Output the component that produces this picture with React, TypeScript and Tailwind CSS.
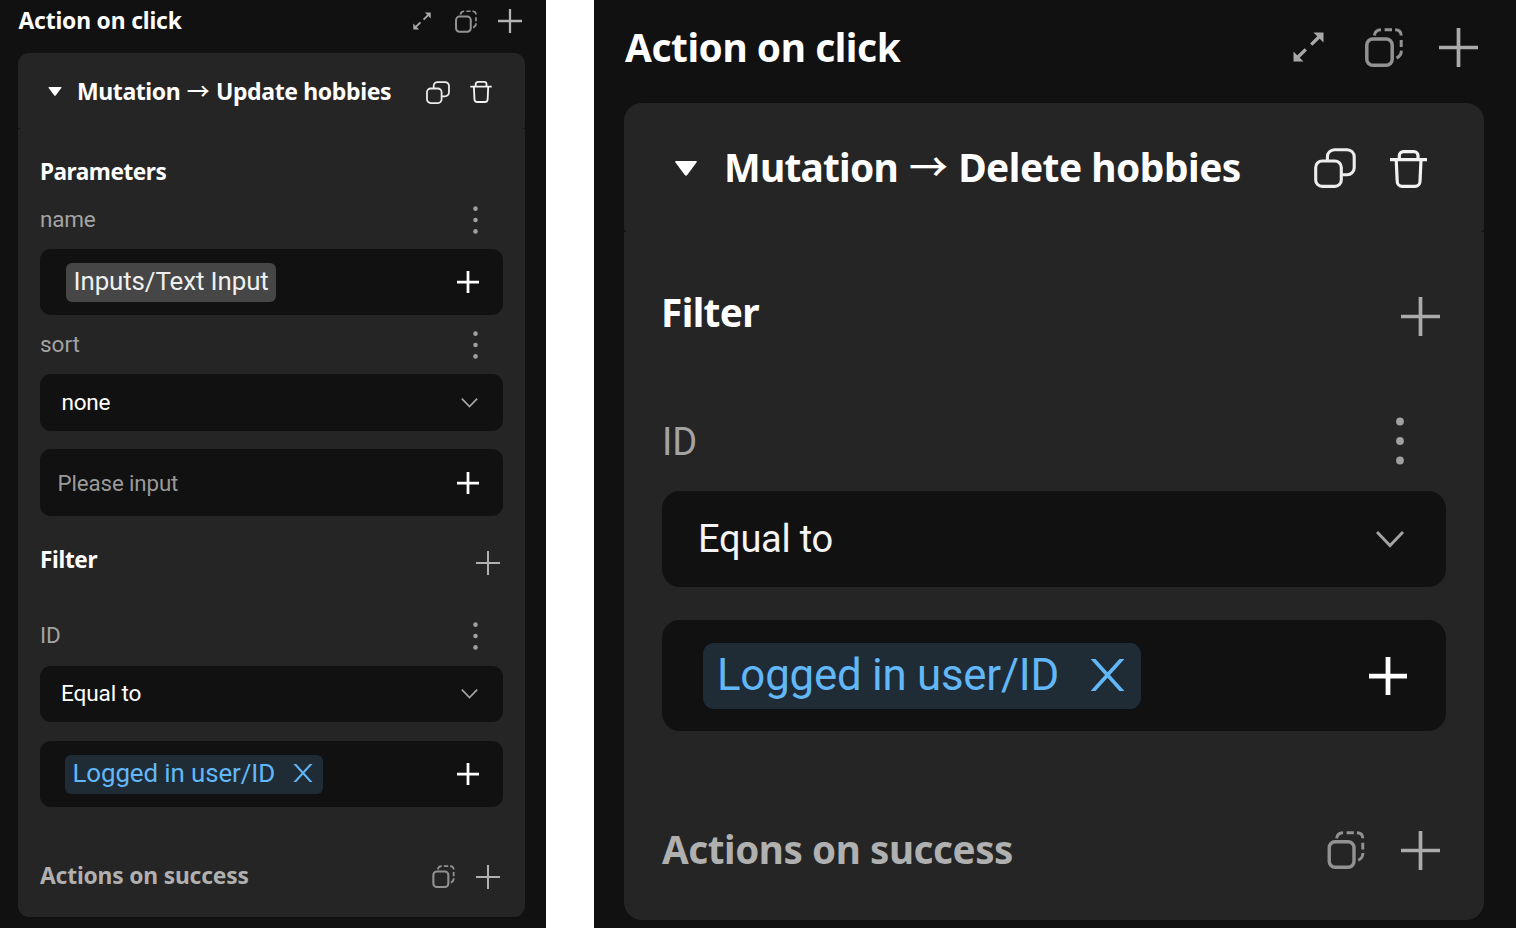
import type { ReactNode } from "react";

const heading = "font-['Noto_Sans',sans-serif] font-bold leading-none whitespace-nowrap";
const body = "font-['Roboto',sans-serif] leading-none whitespace-nowrap";

type IconProps = { className: string };

function Plus({ className, weight }: IconProps & { weight: number }) {
  return (
    <svg viewBox="0 0 40 40" className={`shrink-0 ${className}`} stroke="currentColor" strokeWidth={weight}>
      <path d="M20 0V40M0 20H40" />
    </svg>
  );
}

function Expand({ className }: IconProps) {
  return (
    <svg viewBox="0 0 31 30" className={`shrink-0 text-[#a8a8a8] ${className}`}>
      <path d="M20.5 .5H30.5V10.5ZM.5 19.5V29.5H10.5Z" fill="currentColor" />
      <path d="M18.2 12.6 27 4M12.8 17.4 4 26" stroke="currentColor" strokeWidth="3.4" />
    </svg>
  );
}

function PasteStack({ className }: IconProps) {
  return (
    <svg viewBox="0 0 38 39" className={`shrink-0 text-[#929292] ${className}`} fill="none" stroke="currentColor">
      <rect x="1.8" y="11" width="25.4" height="26.2" rx="6" strokeWidth="3.5" />
      <path d="M9.4 7.5Q10 2 16 1.8M19.6 1.8H27M30.2 1.8Q36.2 2 36.2 7.5M36.2 12V19M36.4 22.6Q36.2 28 31.5 30" strokeWidth="3" />
    </svg>
  );
}

function Duplicate({ className }: IconProps) {
  return (
    <svg viewBox="0 0 42 40" className={`shrink-0 text-[#ededed] ${className}`} fill="none" stroke="currentColor" strokeWidth="3.1">
      <rect x="1.7" y="13" width="25.6" height="25.4" rx="6.5" />
      <path d="M13.4 12.5V8.7a7 7 0 0 1 7-7h12.8a7 7 0 0 1 7 7v11a7 7 0 0 1-7 7h-5.5" />
    </svg>
  );
}

function Trash({ className }: IconProps) {
  return (
    <svg viewBox="0 0 37 38" className={`shrink-0 text-[#f2f2f2] ${className}`} fill="none" stroke="currentColor" strokeWidth="3.2">
      <path d="M0 9.6H37M9.3 9.5V5.6a4 4 0 0 1 4-4H24a4 4 0 0 1 4 4V9.5M6.2 9.6 7.2 31.5a5 5 0 0 0 5 4.8H25a5 5 0 0 0 5-4.8L31 9.6" />
    </svg>
  );
}

function Kebab({ className }: IconProps) {
  return (
    <svg viewBox="0 0 8 48" className={`shrink-0 text-[#a0a0a0] ${className}`} fill="currentColor">
      <circle cx="4" cy="4.5" r="3.9" />
      <circle cx="4" cy="24" r="3.9" />
      <circle cx="4" cy="43.5" r="3.9" />
    </svg>
  );
}

function Chevron({ className }: IconProps) {
  return (
    <svg viewBox="0 0 28 17" className={`shrink-0 text-[#a3a3a3] ${className}`} fill="none" stroke="currentColor" strokeWidth="2.9">
      <path d="M1 1 14 14.6 27 1" />
    </svg>
  );
}

function Caret({ className }: IconProps) {
  return (
    <svg viewBox="0 0 22 15" className={`shrink-0 ${className}`} fill="#fff">
      <path d="M1 0H21Q22.4 .4 21.5 1.6L12.2 14Q11 15.4 9.8 14L.5 1.6Q-.4 .4 1 0Z" />
    </svg>
  );
}

function Remove({ className }: IconProps) {
  return (
    <svg viewBox="0 0 33 32" className={`shrink-0 ${className}`} stroke="currentColor" strokeWidth="3.7">
      <path d="M.6-1.6 32.4 33.6M32.4-1.6 .6 33.6" />
    </svg>
  );
}

function Field({ className, children }: { className: string; children: ReactNode }) {
  return <div className={`flex items-center justify-between bg-[#111111] ${className}`}>{children}</div>;
}

function UpdatePanel() {
  return (
    <section className="flex h-[928px] w-[546px] flex-col bg-[#111111] text-white">
      <header className="flex h-[42px] items-center justify-between pr-6 pl-[18.5px]">
        <h2 className={`${heading} text-[22.8px] tracking-[-0.007em]`}>Action on click</h2>
        <div className="flex items-center">
          <Expand className="h-[18px] w-[18px]" />
          <PasteStack className="ml-6 h-[23px] w-[22px]" />
          <Plus weight={3.8} className="ml-[21px] size-6 text-[#b4b4b4]" />
        </div>
      </header>
      <div className="mt-[11px] ml-[18px] w-[507px]">
        <div className="flex h-[76px] items-center rounded-t-[11px] rounded-b-[3px] bg-[#252525] pt-px pr-[33.5px] pl-[30px]">
          <Caret className="h-[9px] w-[14px]" />
          <h3 className={`${heading} ml-[15px] flex items-center text-[23px] tracking-[-0.018em]`}>
            <span>Mutation</span>
            <span className="mb-[3px] ml-[6.5px] font-['Noto_Sans_CJK_SC'] font-medium">→</span>
            <span className="ml-[6.5px] tracking-[-0.016em]">Update hobbies</span>
          </h3>
          <Duplicate className="mt-px ml-auto h-[23px] w-6" />
          <Trash className="mt-px ml-[20px] h-[22px] w-[22px]" />
        </div>
        <div className="h-[788px] rounded-b-[11px] bg-[#252525] px-[22px] pt-[26px]">
          <h4 className={`${heading} flex h-[35px] items-center pb-px text-[22.6px] tracking-[-0.021em]`}>Parameters</h4>
          <div className="flex h-[59px] items-center justify-between pr-6 text-[#a3a3a3]">
            <span className={`${body} text-[22.5px] tracking-[-0.008em]`}>name</span>
            <Kebab className="h-[28px] w-[7px]" />
          </div>
          <Field className="h-[66px] rounded-[11px] pr-6 pl-[26px]">
            <span className={`${body} flex h-[39px] w-[210px] items-center rounded-md bg-[#464646] pl-[7.5px] text-[25.9px] tracking-[-0.004em] text-[#efefef]`}>
              Inputs/Text Input
            </span>
            <Plus weight={5} className="size-[22px]" />
          </Field>
          <div className="flex h-[59px] items-center justify-between pr-6 text-[#a3a3a3]">
            <span className={`${body} text-[22.5px]`}>sort</span>
            <Kebab className="h-[28px] w-[7px]" />
          </div>
          <Field className="h-[57px] rounded-[11px] pr-[25px] pl-[21.5px]">
            <span className={`${body} mb-px text-[22.5px] tracking-[-0.01em]`}>none</span>
            <Chevron className="h-[10px] w-[17px]" />
          </Field>
          <Field className="mt-[18px] h-[67px] rounded-[11px] pr-6 pl-[17.5px]">
            <span className={`${body} mt-0.5 text-[22.3px] tracking-[-0.005em] text-[#9a9a9a]`}>Please input</span>
            <Plus weight={5} className="size-[22px]" />
          </Field>
          <div className="mt-6 flex h-[44px] items-center justify-between pr-[3px]">
            <h4 className={`${heading} mb-[3px] text-[22.6px] tracking-[-0.015em]`}>Filter</h4>
            <Plus weight={3.4} className="mt-px size-6 text-[#b0b0b0]" />
          </div>
          <div className="mt-[22px] flex h-[60px] items-center justify-between pr-6 text-[#a3a3a3]">
            <span className={`${body} mb-px text-[22.5px]`}>ID</span>
            <Kebab className="h-[28px] w-[7px]" />
          </div>
          <Field className="h-14 rounded-[11px] pr-[25px] pl-[21px]">
            <span className={`${body} text-[22.6px] tracking-[-0.006em]`}>Equal to</span>
            <Chevron className="h-[10px] w-[17px]" />
          </Field>
          <Field className="mt-[19px] h-[66px] rounded-[11px] pr-6 pl-[25px]">
            <span className={`${body} flex h-[39px] w-[258px] items-center rounded-md bg-[#1f2c35] pr-[10.5px] pl-[7.5px] text-[25.9px] tracking-[-0.004em] text-[#62b7f8]`}>
              Logged in user/ID
              <Remove className="mb-0.5 ml-auto h-[18px] w-5" />
            </span>
            <Plus weight={5} className="size-[22px]" />
          </Field>
          <div className="mt-[49px] flex h-10 items-center pr-[3px]">
            <h4 className={`${heading} mt-px text-[22.8px] tracking-[-0.008em] text-[#b0b0b0]`}>Actions on success</h4>
            <PasteStack className="mt-px ml-auto h-[23px] w-[23px]" />
            <Plus weight={3.4} className="mt-px ml-[21px] size-6 text-[#b0b0b0]" />
          </div>
        </div>
      </div>
    </section>
  );
}

function DeletePanel() {
  return (
    <section className="flex h-[928px] w-[922px] flex-col bg-[#111111] text-white">
      <header className="flex h-[94px] items-center justify-between pr-[38px] pl-[31px]">
        <h2 className={`${heading} text-[38.8px] tracking-[-0.011em]`}>Action on click</h2>
        <div className="flex items-center">
          <Expand className="h-[30px] w-[31px]" />
          <PasteStack className="ml-[41px] h-[39px] w-[38px]" />
          <Plus weight={3.8} className="ml-[36px] size-[39px] text-[#ababab]" />
        </div>
      </header>
      <div className="mt-[9px] ml-[30px] w-[860px]">
        <div className="flex h-[129px] items-center rounded-t-[18px] rounded-b-[4px] bg-[#252525] pr-[57px] pl-[51px]">
          <Caret className="mt-px h-[15px] w-[22px]" />
          <h3 className={`${heading} ml-[27px] flex items-center text-[38.9px] tracking-[-0.02em]`}>
            <span>Mutation</span>
            <span className="mb-[6px] ml-[11px] font-['Noto_Sans_CJK_SC'] font-medium">→</span>
            <span className="ml-[11px] tracking-[-0.013em]">Delete hobbies</span>
          </h3>
          <Duplicate className="mt-px ml-auto h-10 w-[42px]" />
          <Trash className="mt-0.5 ml-[34px] h-[38px] w-[37px]" />
        </div>
        <div className="h-[688px] rounded-b-[18px] bg-[#252525] px-[38px] pt-[58px]">
          <div className="flex h-[50px] items-center justify-between pr-[6px]">
            <h4 className={`${heading} mb-[5px] -ml-px text-[38.8px] tracking-[-0.016em]`}>Filter</h4>
            <Plus weight={3.8} className="mt-[3px] size-[39px] text-[#ababab]" />
          </div>
          <div className="mt-[52px] flex h-[99px] items-center justify-between pr-[42px] text-[#a3a3a3]">
            <span className={`${body} text-[38px]`}>ID</span>
            <Kebab className="mb-px h-12 w-2" />
          </div>
          <Field className="h-24 rounded-[18px] pr-[42px] pl-[36px]">
            <span className={`${body} text-[38px] tracking-[-0.006em] text-[#f4f4f4]`}>Equal to</span>
            <Chevron className="h-[17px] w-7" />
          </Field>
          <Field className="mt-[33px] h-[111px] rounded-[18px] pr-[39px] pl-[41px]">
            <span className={`${body} flex h-[66px] w-[438px] items-center rounded-[11px] bg-[#1f2c35] pr-[17px] pl-[14px] text-[43.8px] tracking-[-0.005em] text-[#62b7f8]`}>
              Logged in user/ID
              <Remove className="mb-0.5 ml-auto h-8 w-[33px]" />
            </span>
            <Plus weight={5} className="size-[38px]" />
          </Field>
          <div className="mt-[94px] flex h-[50px] items-center pr-[6px]">
            <h4 className={`${heading} mb-0.5 text-[38.6px] tracking-[-0.011em] text-[#b0b0b0]`}>Actions on success</h4>
            <PasteStack className="ml-auto h-[38px] w-[38px]" />
            <Plus weight={3.8} className="ml-[36px] size-[39px] text-[#ababab]" />
          </div>
        </div>
      </div>
    </section>
  );
}

export default function App() {
  return (
    <main className="flex h-[928px] w-[1516px] justify-between overflow-hidden bg-white">
      <UpdatePanel />
      <DeletePanel />
    </main>
  );
}
